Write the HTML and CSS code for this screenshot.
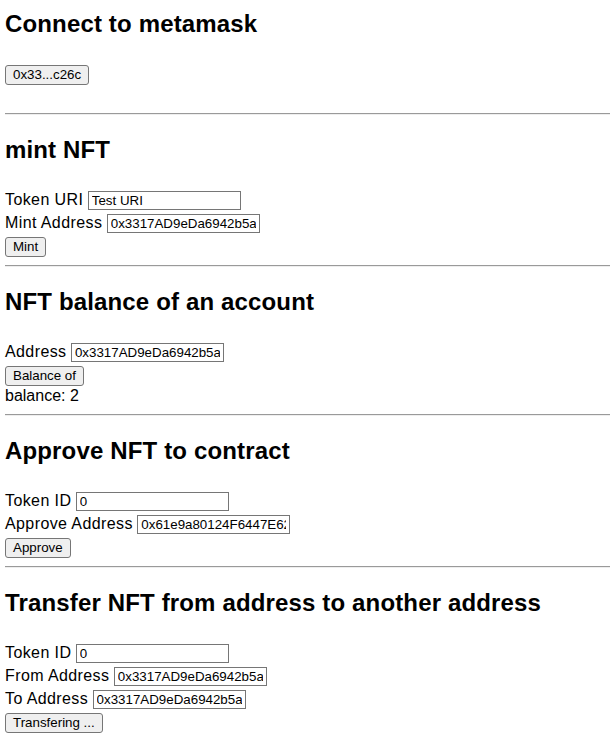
FILE: index.html
```html
<!DOCTYPE html>
<html>
<head>
<meta charset="utf-8">
<link rel="stylesheet" href="styles.css">
</head>
<body>
<section class="sec first">
  <h2>Connect to metamask</h2>
  <div class="row connect"><button class="btn">0x33...c26c</button></div>
</section>
<hr>
<section class="sec">
  <h2>mint NFT</h2>
  <div class="row"><span class="lbl">Token URI</span> <input class="inp" value="Test URI"></div>
  <div class="row"><span class="lbl">Mint Address</span> <input class="inp" value="0x3317AD9eDa6942b5a1C0e6B2c1F7d8E9a3b26c"></div>
  <div class="row"><button class="btn">Mint</button></div>
</section>
<hr>
<section class="sec">
  <h2>NFT balance of an account</h2>
  <div class="row"><span class="lbl">Address</span> <input class="inp" value="0x3317AD9eDa6942b5a1C0e6B2c1F7d8E9a3b26c"></div>
  <div class="row"><button class="btn">Balance of</button></div>
  <div class="row text">balance: 2</div>
</section>
<hr>
<section class="sec">
  <h2>Approve NFT to contract</h2>
  <div class="row"><span class="lbl">Token ID</span> <input class="inp" value="0"></div>
  <div class="row"><span class="lbl">Approve Address</span> <input class="inp" value="0x61e9a80124F6447E62b3D5a8c7E0F1b2A9d4c3e5"></div>
  <div class="row"><button class="btn">Approve</button></div>
</section>
<hr>
<section class="sec">
  <h2>Transfer NFT from address to another address</h2>
  <div class="row"><span class="lbl">Token ID</span> <input class="inp" value="0"></div>
  <div class="row"><span class="lbl">From Address</span> <input class="inp" value="0x3317AD9eDa6942b5a1C0e6B2c1F7d8E9a3b26c"></div>
  <div class="row"><span class="lbl">To Address</span> <input class="inp" value="0x3317AD9eDa6942b5a1C0e6B2c1F7d8E9a3b26c"></div>
  <div class="row"><button class="btn">Transfering ...</button></div>
</section>
</body>
</html>
```

FILE: styles.css
```css
html, body {
  margin: 0;
  padding: 0;
  background: #ffffff;
}
body {
  padding-left: 5px;
  font-family: "Liberation Sans", Arial, Helvetica, sans-serif;
  font-size: 16px;
  color: #000000;
  overflow: hidden;
}
.sec {
  margin: 0;
}
h2 {
  font-size: 24px;
  font-weight: bold;
  line-height: 28px;
  letter-spacing: 0.15px;
  margin: 21px 0 24px;
}
.first h2 {
  margin-top: 10px;
}
.row {
  line-height: 23px;
  height: 23px;
  white-space: nowrap;
}
.row.text {
  line-height: 20px;
  height: 20px;
}
.lbl {
  letter-spacing: 0.4px;
}
.connect {
  margin-bottom: 28px;
}
hr {
  margin: 8px 0 0;
  border: 0;
  height: 0;
  border-top: 1px solid #9a9a9a;
  border-bottom: 1px solid #eeeeee;
}
.inp {
  box-sizing: border-box;
  width: 153px;
  height: 19px;
  font-family: "Liberation Sans", Arial, Helvetica, sans-serif;
  font-size: 13.33px;
  line-height: 15px;
  padding: 1px 3px;
  border: 1px solid #767676;
  border-radius: 0;
  color: #000;
  background: #fff;
  margin: 0;
}
.btn {
  font-family: "Liberation Sans", Arial, Helvetica, sans-serif;
  font-size: 13.33px;
  line-height: 16px;
  padding: 1px 7px;
  border: 1px solid #767676;
  border-radius: 3px;
  background: #efefef;
  color: #000;
  margin: 0;
}
```
